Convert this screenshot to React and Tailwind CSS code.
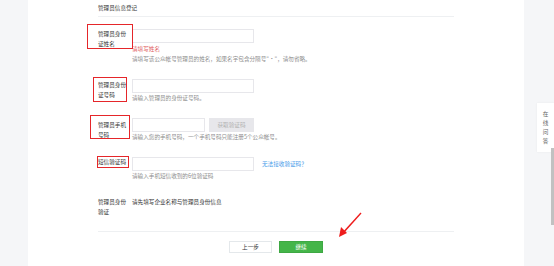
import React from "react";

const font = { fontFamily: '"Noto Sans CJK SC", "Liberation Sans", sans-serif' };

function Label({ children }) {
  return (
    <div className="w-[34px] shrink-0 pr-[4px] text-[5.6px] leading-[10px] text-[#353535]">
      {children}
    </div>
  );
}

function Input({ w = "w-[122px]" }) {
  return <div className={`${w} h-[14px] border border-[#e7e7eb] bg-white`} />;
}

function Help({ children, className = "" }) {
  return <div className={`text-[5.6px] leading-[10px] text-[#8d8d8d] ${className}`}>{children}</div>;
}

function Box({ className }) {
  return <div className={`absolute border-[1.5px] border-[#e5262a] pointer-events-none ${className}`} />;
}

export default function App() {
  return (
    <div style={font} className="flex w-[554px] h-[266px] overflow-hidden bg-[#f5f6f8]">
      <div className="w-[28px] shrink-0" />

      <div className="relative w-[496px] shrink-0 bg-white px-[70px]">
        <div className="h-[17px] border-b border-[#eef0f2] pt-[5px] text-[5.6px] leading-[6px] text-[#353535]">
          管理员信息登记
        </div>

        {/* 姓名 */}
        <div className="relative mt-[12px] flex">
          <Box className="left-[-11px] top-[-5px] w-[46px] h-[25px]" />
          <Label>管理员身份证姓名</Label>
          <div>
            <Input />
            <div className="mt-[1px] text-[5.6px] leading-[10px] text-[#e15f63]">请填写姓名</div>
            <Help>请填写该公众帐号管理员的姓名，如果名字包含分隔号"·"，请勿省略。</Help>
          </div>
        </div>

        {/* 身份证号码 */}
        <div className="relative mt-[15px] flex">
          <Box className="left-[-5px] top-[-2px] w-[34px] h-[25px]" />
          <div className="pt-[1px]">
            <Label>管理员身份证号码</Label>
          </div>
          <div>
            <Input />
            <Help>请输入管理员的身份证号码。</Help>
          </div>
        </div>

        {/* 手机号码 */}
        <div className="relative mt-[15px] flex">
          <Box className="left-[-8px] top-[-3px] w-[40px] h-[24px]" />
          <div className="pt-[2px]">
            <Label>管理员手机号码</Label>
          </div>
          <div>
            <div className="flex gap-[4px]">
              <Input w="w-[73px]" />
              <div className="flex h-[14px] w-[45px] items-center justify-center bg-[#e7e7eb] text-[5.6px] text-[#b2b2b2]">
                获取验证码
              </div>
            </div>
            <Help>请输入您的手机号码，一个手机号码只能注册5个公众帐号。</Help>
          </div>
        </div>

        {/* 短信验证码 */}
        <div className="relative mt-[15px] flex">
          <Box className="left-[-1px] top-[-1px] w-[32px] h-[12px]" />
          <Label>短信验证码</Label>
          <div>
            <div className="flex items-center">
              <Input />
              <span className="ml-[8px] mt-[1px] text-[5.6px] text-[#459ae9]">无法接收验证码？</span>
            </div>
            <Help>请输入手机短信收到的6位验证码</Help>
          </div>
        </div>

        {/* 身份验证 */}
        <div className="mt-[16px] flex">
          <Label>管理员身份验证</Label>
          <div className="text-[5.6px] leading-[10px] text-[#353535]">请先填写企业名称与管理员身份信息</div>
        </div>

        <div className="mt-[14px] border-t border-[#eef0f2] pt-[9px] flex justify-center gap-[7px]">
          <div className="flex h-[12px] w-[43px] items-center justify-center border border-[#e4e8eb] bg-white text-[5.6px] text-[#353535]">
            上一步
          </div>
          <div className="flex h-[12px] w-[44px] items-center justify-center border border-[#3ea843] bg-[#44b549] text-[5.6px] text-white">
            继续
          </div>
        </div>

        {/* annotation arrow */}
        <svg className="absolute left-[270px] top-[205px] pointer-events-none" width="70" height="40" viewBox="0 0 70 40">
          <polygon points="62.5,7.5 63.5,8.5 46,28 44.8,27" fill="#ee1c1c" />
          <polygon points="41,32 43,22 49,28" fill="#ee1c1c" />
        </svg>
      </div>

      <div className="relative flex-1">
        <div className="absolute right-0 top-[103px] flex h-[49px] w-[17px] flex-col items-center justify-center gap-[3px] bg-white text-[5.6px] leading-[6px] text-[#666] shadow-[0_0_2px_rgba(0,0,0,0.06)]">
          <span>在</span>
          <span>线</span>
          <span>问</span>
          <span>答</span>
        </div>
        <div className="absolute right-0 top-[148px] h-[77px] w-[3px] bg-[#c1c1c1]" />
      </div>
    </div>
  );
}
